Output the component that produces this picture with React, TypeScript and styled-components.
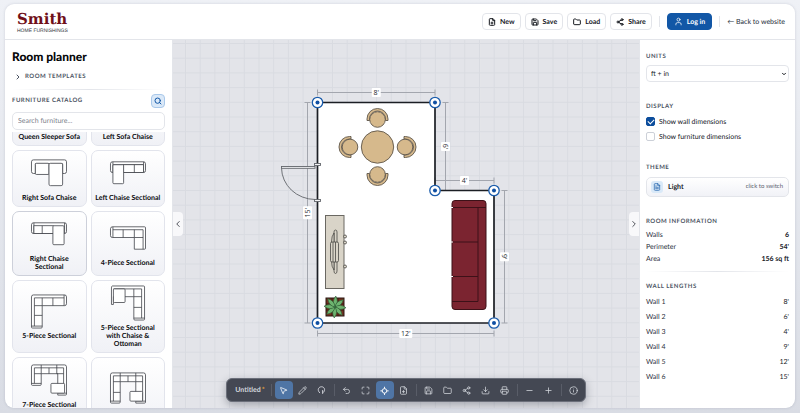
import React, { useLayoutEffect, useRef } from "react";
import styled, { createGlobalStyle, css } from "styled-components";
import {
  FilePlus, Save, Folder, Share2, User, Search, ChevronRight, ChevronLeft, ChevronDown, MousePointer2,
  Pencil, Undo2, Maximize, Download, Printer, Minus, Plus, Info, FileText,
} from "lucide-react";

const line = "#e3e5ea";
const muted = "#4d5564";
const blue = "#1257a6";

const Global = createGlobalStyle`
  * { box-sizing: border-box; }
  body { margin: 0; background: linear-gradient(#eff1f6, #d9dce4); color: #16191f;
    font-family: Lato, "Open Sans", sans-serif; font-size: 7px; line-height: 10px;
    text-rendering: geometricPrecision; }
  button, input, select { font: inherit; color: inherit; margin: 0; text-rendering: inherit; }
  button { cursor: pointer; }
`;

const Page = styled.div`
  height: 100vh;
  padding: 4px 5px 5px;
`;
const Shell = styled.div`
  height: 100%;
  display: flex;
  flex-direction: column;
  overflow: hidden;
  background: #fff;
  border-radius: 9px;
  box-shadow: 0 0 3px rgba(40, 50, 80, 0.16);
`;
const Header = styled.header`
  flex: none;
  height: 36px;
  display: flex;
  align-items: center;
  justify-content: space-between;
  padding: 0 10px 0 12px;
  border-bottom: 1px solid ${line};
`;
const Logo = styled.a`
  display: block;
  color: #701019;
  text-decoration: none;
`;
const LogoName = styled.span`
  display: block;
  font: 700 15px/18px "DejaVu Serif", serif;
`;
const LogoTag = styled.span`
  display: block;
  font: 400 5px/6px "Liberation Sans", sans-serif;
  color: #33363b;
`;
const Actions = styled.div`
  display: flex;
  align-items: center;
  gap: 4px;
`;
const ActionButton = styled.button<{ $primary?: boolean }>`
  display: flex;
  align-items: center;
  justify-content: center;
  gap: 4px;
  height: 17px;
  padding: 0 ${(p) => (p.$primary ? 6 : 5)}px;
  border: 1px solid ${(p) => (p.$primary ? blue : line)};
  border-radius: 4px;
  background: ${(p) => (p.$primary ? blue : "#fff")};
  color: ${(p) => (p.$primary ? "#fff" : "#16191f")};
  font-weight: 700;
`;
const HeaderDivider = styled.span`
  width: 1px;
  height: 11px;
  margin: 0 3px;
  background: ${line};
`;
const BackLink = styled.a`
  color: #333a47;
  text-decoration: none;
  font-weight: 500;
`;

const Body = styled.div`
  flex: 1;
  min-height: 0;
  display: flex;
`;
const Sidebar = styled.aside`
  flex: none;
  width: 168px;
  display: flex;
  flex-direction: column;
  padding: 0 7px;
  border-right: 1px solid ${line};
`;
const Title = styled.h1`
  margin: 9px 0 8px;
  font-size: 12px;
  line-height: 16px;
  font-weight: 900;
  color: #050608;
`;
const captionText = css`
  font-size: 6px;
  line-height: 8px;
  font-weight: 700;
  letter-spacing: 0.5px;
  text-transform: uppercase;
  color: ${muted};
`;
const Disclosure = styled.button`
  ${captionText}
  display: flex;
  align-items: center;
  gap: 3px;
  padding: 0 2px;
  border: 0;
  background: none;
`;
const Fade = styled.hr<{ $roomy?: boolean }>`
  width: 100%;
  height: 1px;
  margin: ${(p) => (p.$roomy ? "6px 0 11px" : "8px 0 4px")};
  border: 0;
  background: linear-gradient(90deg, transparent, ${line} 50%, transparent);
`;
const CatalogHead = styled.div`
  display: flex;
  align-items: center;
  justify-content: space-between;
`;
const Caption = styled.h2`
  ${captionText}
  margin: 0;
`;
const SearchToggle = styled.button`
  display: grid;
  place-items: center;
  width: 14px;
  height: 14px;
  padding: 0;
  border: 1px solid #a9c8ea;
  border-radius: 4px;
  background: #dbe9f8;
  color: ${blue};
`;
const SearchInput = styled.input`
  width: 100%;
  height: 18px;
  margin: 4px 0 2px;
  padding: 0 5px;
  border: 1px solid ${line};
  border-radius: 5px;
  background: #fff;
  outline: none;
  &::placeholder { color: #7d828c; opacity: 1; }
`;
const Catalog = styled.div`
  flex: 1;
  min-height: 0;
  overflow-y: auto;
  scrollbar-width: none;
  display: grid;
  grid-template-columns: 1fr 1fr;
  grid-auto-rows: max-content;
  gap: 4px;
`;
const Card = styled.button<{ $active?: boolean }>`
  display: flex;
  flex-direction: column;
  align-items: center;
  justify-content: center;
  gap: 3px;
  min-width: 0;
  padding: 4px 3px;
  border: 1px solid ${(p) => (p.$active ? "#cdd0da" : "#e2e4ec")};
  border-radius: 7px;
  background: linear-gradient(#fff, #f0f1f6);
  font-weight: 700;
  line-height: 8px;
  color: #08090c;
`;
const CardLabel = styled.span<{ $narrow?: boolean }>`
  max-width: ${(p) => (p.$narrow ? "58px" : "none")};
`;
const Sketch = styled.svg`
  display: block;
  width: 38px;
  height: 36px;
  fill: #fff;
  stroke: #3c3f45;
  stroke-width: 0.8;
`;

const Stage = styled.main`
  flex: 1;
  min-width: 0;
  display: grid;
  overflow: hidden;
  background: #e3e4e9;
  > * { grid-area: 1 / 1; }
`;
const Plan = styled.svg`
  width: 100%;
  height: 100%;
  min-height: 0;
  font-family: "Open Sans", sans-serif;
  font-size: 7px;
`;
const PanelHandle = styled.button<{ $side: "left" | "right" }>`
  z-index: 1;
  align-self: center;
  justify-self: ${(p) => (p.$side === "left" ? "start" : "end")};
  display: grid;
  place-items: center;
  width: 10px;
  height: 24px;
  padding: 0;
  border: 0;
  border-radius: ${(p) => (p.$side === "left" ? "0 4px 4px 0" : "4px 0 0 4px")};
  background: #f8f8fa;
  color: #30343c;
`;
const Toolbar = styled.div`
  z-index: 1;
  align-self: end;
  justify-self: center;
  display: flex;
  align-items: center;
  gap: 1px;
  height: 24px;
  margin-bottom: 6px;
  padding: 0 2px 0 8px;
  border: 1px solid #6b6f7a;
  border-radius: 6px;
  background: #444853;
  box-shadow: 0 3px 9px rgba(40, 45, 60, 0.35);
`;
const DocName = styled.span`
  display: flex;
  gap: 1px;
  margin-right: 3px;
  color: #d6d9df;
  font-weight: 700;
`;
const Unsaved = styled.span`
  color: #e0a23c;
`;
const Tool = styled.button<{ $active?: boolean }>`
  display: grid;
  place-items: center;
  width: 18px;
  height: 18px;
  padding: 0;
  border: 0;
  border-radius: 4px;
  background: ${(p) => (p.$active ? "#4f75a5" : "transparent")};
  color: ${(p) => (p.$active ? "#fff" : "#d6d9df")};
`;
const ToolDivider = styled.span`
  width: 1px;
  height: 12px;
  margin: 0 2px;
  background: #595d68;
`;

const Inspector = styled.aside`
  flex: none;
  width: 156px;
  display: flex;
  flex-direction: column;
  padding: 13px 6px 0;
  border-left: 1px solid ${line};
`;
const Section = styled.section`
  display: flex;
  flex-direction: column;
  margin-bottom: 21px;
`;
const SelectBox = styled.div`
  display: grid;
  align-items: center;
  margin-top: 4px;
  > * { grid-area: 1 / 1; }
  > svg { justify-self: end; margin-right: 2px; pointer-events: none; }
`;
const UnitSelect = styled.select`
  appearance: none;
  width: 100%;
  height: 17px;
  padding: 0 4px;
  border: 1px solid ${line};
  border-radius: 4px;
  background: #fff;
`;
const Checks = styled.div`
  padding-bottom: 2px;
`;
const Check = styled.label`
  display: flex;
  align-items: center;
  gap: 4px;
  height: 9px;
  margin-top: 6px;
`;
const CheckBox = styled.input`
  appearance: none;
  display: grid;
  place-items: center;
  width: 9px;
  height: 9px;
  border: 1px solid #ccd0d8;
  border-radius: 2px;
  background: #fff;
  &:checked { background: #0c4d9c; border-color: #0c4d9c; }
  &:checked::after {
    content: "";
    width: 5px;
    height: 3px;
    margin-bottom: 2px;
    border: solid #fff;
    border-width: 0 0 1px 1px;
    transform: rotate(-45deg);
  }
`;
const ThemeButton = styled.button`
  display: flex;
  align-items: center;
  gap: 5px;
  height: 20px;
  margin-top: 5px;
  padding: 0 5px 0 4px;
  border: 1px solid ${line};
  border-radius: 5px;
  background: linear-gradient(#fff, #f1f2f7);
  font-weight: 700;
`;
const ThemeIcon = styled.span`
  display: grid;
  place-items: center;
  width: 12px;
  height: 12px;
  border-radius: 3px;
  background: #d9e9f8;
  color: ${blue};
`;
const Hint = styled.span`
  margin-left: auto;
  font-size: 6px;
  font-weight: 400;
  color: #5c6371;
`;
const Facts = styled.table<{ $row: number; $strong?: boolean }>`
  width: 100%;
  border-collapse: collapse;
  th, td { height: ${(p) => p.$row}px; padding: 0; }
  th { text-align: left; font-weight: 400; color: #2b313c; }
  td { text-align: right; font-weight: ${(p) => (p.$strong ? 700 : 400)}; }
`;
const InfoBlock = styled.section`
  ${Facts} { margin-top: 3px; }
`;

type Kind = "queen" | "left" | "rightSofa" | "leftChaise" | "rightChaise" | "four" | "five" | "fiveOttoman" | "seven" | "uShape";

const drawings: Record<Kind, React.ReactNode> = {
  queen: <><rect x="1" y="6" width="36" height="20" rx="2" /><rect x="5" y="10" width="28" height="18" /></>,
  left: <><rect x="1" y="6" width="36" height="14" rx="2" /><rect x="5" y="10" width="14" height="22" rx="1" /></>,
  rightSofa: <>
    <rect x="1" y="5" width="36" height="14" rx="2" />
    <path d="M5 19V9H33V19" />
    <rect x="5" y="8.500" width="14" height="11.500" rx="1" />
    <rect x="19" y="8.500" width="14" height="23" rx="1.500" />
  </>,
  leftChaise: <>
    <rect x="1" y="7" width="36" height="11" rx="2" />
    <path d="M3.500 7V18M35 7V18M3.500 10H35" />
    <rect x="14" y="10" width="21" height="8" />
    <path d="M25.500 10V18" />
    <rect x="3.500" y="10" width="11" height="19.500" rx="1" />
  </>,
  rightChaise: <>
    <rect x="1" y="7" width="36" height="11" rx="2" />
    <path d="M3.500 7V18M35 7V18" />
    <rect x="3.500" y="10" width="20" height="8" />
    <path d="M12 10V18" />
    <rect x="23" y="10" width="11.500" height="19.500" rx="1" />
  </>,
  four: <>
    <path d="M3 7H36Q37 7 37 8V29Q37 30 36 30H25.500V18H3Q1 18 1 16V9Q1 7 3 7Z" />
    <path fill="none" d="M3.500 7V18M3.500 10H34.500V30M14 10V18M25.500 10V18H34.500" />
  </>,
  five: <>
    <path d="M3 2H35Q37 2 37 4V11Q37 13 35 13H12V35Q12 36 11 36H2Q1 36 1 35V4Q1 2 3 2Z" />
    <path fill="none" d="M34.500 2V13M4 34V5H34.500M12 5V13H4M23 5V13M4 23H12M1 34H12" />
  </>,
  fiveOttoman: <>
    <path d="M3 1H35Q36 1 36 2V35Q36 36 35 36H26Q25 36 25 35V12H4V20H2V3Q2 1 3 1Z" />
    <path fill="none" d="M4 4H33V34M25 4V12H33M25 23H33M25 34H36" />
    <rect x="4" y="4" width="12" height="14" rx="1" />
  </>,
  seven: <>
    <path d="M3 3H35Q37 3 37 5V33Q37 34 36 34H28V12H11V23Q11 24 10 24H2Q1 24 1 23V5Q1 3 3 3Z" />
    <path fill="none" d="M4 22V6H34V32M11 3V12H4M19 6V12M27 3V12H34M1 22H11M28 32H37" />
    <rect x="21" y="22" width="14" height="10" rx="1" />
  </>,
  uShape: <>
    <path d="M3 3H35Q37 3 37 5V33Q37 34 36 34H27V12H11V33Q11 34 10 34H2Q1 34 1 33V5Q1 3 3 3Z" />
    <path fill="none" d="M4 32V6H34V32M11 3V12H4M19 6V12M27 3V12H34M4 23H11M1 32H11M27 32H37" />
    <rect x="21" y="22" width="13" height="10" rx="1" />
  </>,
};

const catalog: { name: string; kind: Kind; active?: boolean; narrow?: boolean }[] = [
  { name: "Queen Sleeper Sofa", kind: "queen" },
  { name: "Left Sofa Chaise", kind: "left" },
  { name: "Right Sofa Chaise", kind: "rightSofa" },
  { name: "Left Chaise Sectional", kind: "leftChaise" },
  { name: "Right Chaise Sectional", kind: "rightChaise", active: true, narrow: true },
  { name: "4-Piece Sectional", kind: "four" },
  { name: "5-Piece Sectional", kind: "five" },
  { name: "5-Piece Sectional with Chaise & Ottoman", kind: "fiveOttoman", narrow: true },
  { name: "7-Piece Sectional with Chaise & Ottoman", kind: "seven", narrow: true },
  { name: "8-Piece Sectional", kind: "uShape" },
];

const corners = [[317.5, 102.5], [435, 102.5], [435, 190.5], [494, 190.5], [494, 323], [317.5, 323]];

type DimensionProps = { x1: number; y1: number; x2: number; y2: number; label: string; turn?: number };

function Dimension({ x1, y1, x2, y2, label, turn = 0 }: DimensionProps) {
  const w = label.length > 2 ? 13 : 9;
  const tick = turn ? `M${x1 - 3} ${y1}h6M${x1 - 3} ${y2}h6` : `M${x1} ${y1 - 3}v6M${x2} ${y1 - 3}v6`;
  return (
    <g>
      <path d={`M${x1} ${y1}L${x2} ${y2}${tick}`} stroke="#a3a6ae" fill="none" />
      <g transform={`translate(${(x1 + x2) / 2} ${(y1 + y2) / 2}) rotate(${turn})`}>
        <rect x={-w / 2} y="-4.500" width={w} height="9" rx="1" fill="#fff" />
        <text textAnchor="middle" y="2.500" fill="#2a2d33">{label}</text>
      </g>
    </g>
  );
}

const wood = { fill: "#d6b98c", stroke: "#5f564a", strokeWidth: 0.9 };

function Chair({ x, y, turn }: { x: number; y: number; turn: number }) {
  return (
    <g transform={`translate(${x} ${y}) rotate(${turn})`} {...wood}>
      <path d="M-10.500 1.500V0A10.500 10.500 0 0 1 10.500 0V1.500H8V0A8 8 0 0 0 -8 0V1.500Z" />
      <circle r="7.800" cy="0.500" />
    </g>
  );
}

function FloorPlan() {
  return (
    <Plan viewBox="173 40 466 368" preserveAspectRatio="xMidYMid slice" role="img" aria-label="Floor plan">
      <defs>
        <pattern id="grid" x="185" y="43" width="14.700" height="14.700" patternUnits="userSpaceOnUse">
          <path d="M0.500 0V14.700M0 0.500H14.700" stroke="#d9dbe1" fill="none" />
        </pattern>
      </defs>
      <rect x="-400" y="-400" width="1600" height="1600" fill="url(#grid)" />
      <polygon points={corners.join(" ")} fill="#fff" />
      <Dimension x1={317.5} y1={92.5} x2={435} y2={92.5} label="8'" />
      <Dimension x1={445.5} y1={102.5} x2={445.5} y2={190.5} label="6'" turn={90} />
      <Dimension x1={435} y1={180.5} x2={494} y2={180.5} label="4'" />
      <Dimension x1={504.5} y1={190.5} x2={504.5} y2={323} label="9'" turn={90} />
      <Dimension x1={317.5} y1={333.5} x2={494} y2={333.5} label="12'" />
      <Dimension x1={307.5} y1={102.5} x2={307.5} y2={323} label="15'" turn={-90} />
      <polygon points={corners.join(" ")} fill="none" stroke="#1b1e24" strokeWidth="1.700" />

      <g fill="#f4f4f6" stroke="#62656b" strokeWidth="0.900">
        <path d="M281.500 168A34 32 0 0 0 315 199.500" fill="none" />
        <rect x="281.500" y="166.500" width="33.500" height="1.800" />
        <rect x="314.500" y="163.500" width="6" height="2" />
        <rect x="314.500" y="199.500" width="6" height="2" />
      </g>

      <circle cx="377.500" cy="147" r="16.200" {...wood} />
      <Chair x={377.5} y={119} turn={0} />
      <Chair x={405.5} y={147} turn={90} />
      <Chair x={377.5} y={175} turn={180} />
      <Chair x={349.5} y={147} turn={270} />

      <g stroke="#6a6862" fill="#d9d4c8">
        <rect x="325.500" y="215.500" width="18.500" height="73" />
        <g stroke="#4a4945" strokeWidth="0.800">
          <circle cx="345" cy="236.500" r="1.500" />
          <circle cx="345" cy="242.500" r="1.500" />
          <circle cx="345" cy="266.500" r="1.500" />
          <path d="M334 232Q334 230 335.500 230Q337 230 337 232V271Q337 273.500 335.500 273.500Q334 273.500 334 271Z" />
          <path d="M334 233Q331.500 236 331.500 242V261Q331.500 267 334 270Z" />
          <rect x="330.500" y="242" width="8" height="20" rx="1.500" />
          <path d="M333 242V262M335.500 242V262" />
        </g>
      </g>

      <g>
        <rect x="326" y="298" width="18" height="18" fill="#75301f" stroke="#2a1712" />
        <path d="M326 304H344M326 310H344M332 298V316M338 298V316" stroke="#3c1a12" />
        <g transform="translate(335 307)" fill="#6db36f" stroke="#2c5a34" strokeWidth="0.600">
          {[0, 45, 90, 135, 180, 225, 270, 315].map((a) => (
            <path key={a} transform={`rotate(${a + 4})`} d="M0 0Q-4 -5 0 -11Q4 -5 0 0Z" />
          ))}
        </g>
      </g>

      <g fill="#7b2430" stroke="#3d1118">
        <rect x="452" y="200.500" width="34" height="109" rx="3" />
        <path d="M452 207.500H486M478 207.500V301.500H452M452 242H478M452 276.500H478" fill="none" />
        <path d="M451 207.500h2M451 242h2M451 276.500h2" stroke="#fff" />
      </g>

      {corners.map(([x, y]) => (
        <g key={`${x}-${y}`}>
          <circle cx={x} cy={y} r="5.200" fill="#fff" stroke="#1b5cab" strokeWidth="1.300" />
          <circle cx={x} cy={y} r="2" fill="#0f4fa3" />
        </g>
      ))}
    </Plan>
  );
}

function SnapIcon({ size }: { size: number }) {
  return (
    <svg width={size} height={size} viewBox="0 0 24 24" fill="none" stroke="currentColor" strokeWidth="2.500">
      <circle cx="12" cy="13" r="6" />
      <path d="M12 2V7M12 19V24M1 13H6M18 13H23" />
    </svg>
  );
}

function ArcIcon({ size }: { size: number }) {
  return (
    <svg width={size} height={size} viewBox="0 0 24 24" fill="none" stroke="currentColor" strokeWidth="2.500" strokeLinecap="round">
      <path d="M7 18C-1 10 5 2 12 2C19 2 24 10 17 17M15 12V20" />
    </svg>
  );
}

const tools = [
  [{ label: "Select", Icon: MousePointer2, active: true }, { label: "Draw", Icon: Pencil }, { label: "Rotate", Icon: ArcIcon }],
  [{ label: "Undo", Icon: Undo2 }, { label: "Fit", Icon: Maximize }, { label: "Snap", Icon: SnapIcon, active: true }, { label: "New plan", Icon: FilePlus }],
  [{ label: "Save plan", Icon: Save }, { label: "Open", Icon: Folder }, { label: "Share plan", Icon: Share2 }, { label: "Download", Icon: Download }, { label: "Print", Icon: Printer }],
  [{ label: "Zoom out", Icon: Minus }, { label: "Zoom in", Icon: Plus }],
  [{ label: "About", Icon: Info }],
];

const roomFacts = [["Walls", "6"], ["Perimeter", "54'"], ["Area", "156 sq ft"]];
const wallLengths = ["8'", "6'", "4'", "9'", "12'", "15'"];

export default function App() {
  const list = useRef<HTMLDivElement>(null);
  useLayoutEffect(() => {
    if (list.current) list.current.scrollTop = 43;
  }, []);

  return (
    <Page>
      <Global />
      <Shell>
        <Header>
          <Logo href="#home">
            <LogoName>Smith</LogoName>
            <LogoTag>HOME FURNISHINGS</LogoTag>
          </Logo>
          <Actions>
            <ActionButton><FilePlus size={8} strokeWidth={3} />New</ActionButton>
            <ActionButton><Save size={8} strokeWidth={3} />Save</ActionButton>
            <ActionButton><Folder size={8} strokeWidth={3} />Load</ActionButton>
            <ActionButton><Share2 size={8} strokeWidth={3} />Share</ActionButton>
            <HeaderDivider />
            <ActionButton $primary><User size={9} />Log in</ActionButton>
            <HeaderDivider />
            <BackLink href="#website">← Back to website</BackLink>
          </Actions>
        </Header>
        <Body>
          <Sidebar>
            <Title>Room planner</Title>
            <Disclosure><ChevronRight size={8} strokeWidth={3} />Room templates</Disclosure>
            <Fade />
            <CatalogHead>
              <Caption>Furniture catalog</Caption>
              <SearchToggle aria-label="Toggle search"><Search size={8} strokeWidth={3} /></SearchToggle>
            </CatalogHead>
            <SearchInput aria-label="Search furniture" placeholder="Search furniture..." />
            <Catalog ref={list}>
              {catalog.map((item) => (
                <Card key={item.name} $active={item.active}>
                  <Sketch viewBox="0 0 38 37">{drawings[item.kind]}</Sketch>
                  <CardLabel $narrow={item.narrow}>{item.name}</CardLabel>
                </Card>
              ))}
            </Catalog>
          </Sidebar>
          <Stage>
            <FloorPlan />
            <PanelHandle $side="left" aria-label="Collapse catalog"><ChevronLeft size={10} /></PanelHandle>
            <PanelHandle $side="right" aria-label="Collapse settings"><ChevronRight size={10} /></PanelHandle>
            <Toolbar>
              <DocName>Untitled<Unsaved>*</Unsaved></DocName>
              {tools.map((group, i) => (
                <React.Fragment key={i}>
                  <ToolDivider />
                  {group.map(({ label, Icon, active }: any) => (
                    <Tool key={label} $active={active} aria-label={label}><Icon size={9} /></Tool>
                  ))}
                </React.Fragment>
              ))}
            </Toolbar>
          </Stage>
          <Inspector>
            <Section>
              <Caption as="label" htmlFor="units">Units</Caption>
              <SelectBox>
                <UnitSelect id="units"><option>ft + in</option><option>m</option></UnitSelect>
                <ChevronDown size={6} strokeWidth={4} />
              </SelectBox>
            </Section>
            <Section>
              <Caption>Display</Caption>
              <Checks>
                <Check><CheckBox type="checkbox" defaultChecked />Show wall dimensions</Check>
                <Check><CheckBox type="checkbox" />Show furniture dimensions</Check>
              </Checks>
            </Section>
            <Section>
              <Caption>Theme</Caption>
              <ThemeButton>
                <ThemeIcon><FileText size={8} /></ThemeIcon>
                Light
                <Hint>click to switch</Hint>
              </ThemeButton>
            </Section>
            <InfoBlock>
              <Caption>Room information</Caption>
              <Facts $row={12} $strong>
                <tbody>{roomFacts.map(([k, v]) => <tr key={k}><th scope="row">{k}</th><td>{v}</td></tr>)}</tbody>
              </Facts>
            </InfoBlock>
            <Fade $roomy />
            <InfoBlock>
              <Caption>Wall lengths</Caption>
              <Facts $row={15}>
                <tbody>{wallLengths.map((v, i) => <tr key={v}><th scope="row">Wall {i + 1}</th><td>{v}</td></tr>)}</tbody>
              </Facts>
            </InfoBlock>
          </Inspector>
        </Body>
      </Shell>
    </Page>
  );
}
